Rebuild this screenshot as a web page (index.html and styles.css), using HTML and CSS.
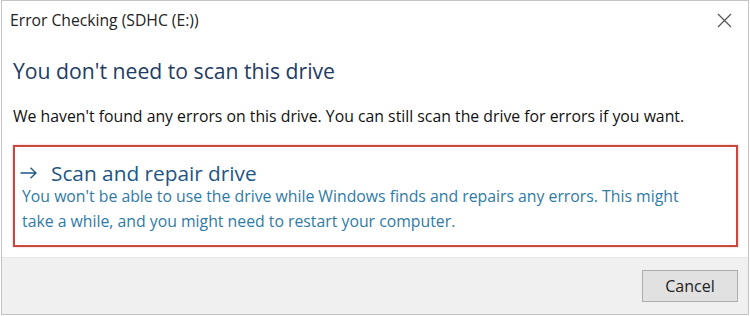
FILE: index.html
```html
<!DOCTYPE html>
<html>
<head>
<meta charset="utf-8">
<link rel="stylesheet" href="styles.css">
</head>
<body>
<div class="window">
  <div class="titlebar">
    <span class="title">Error Checking (SDHC (E:))</span>
    <svg class="close" width="15" height="15" viewBox="0 0 15 15"><path d="M1 1 L14 14 M14 1 L1 14" stroke="#555" stroke-width="1.2" fill="none"/></svg>
  </div>
  <div class="content">
    <h1 class="heading">You don't need to scan this drive</h1>
    <p class="body">We haven't found any errors on this drive. You can still scan the drive for errors if you want.</p>
    <div class="option">
      <div class="option-title"><svg class="arrow" width="17" height="12" viewBox="0 0 17 12"><path d="M0.5 6 H16 M10.5 0.8 L16 6 L10.5 11.2" stroke="#1e5686" stroke-width="1.3" fill="none"/></svg>Scan and repair drive</div>
      <div class="option-desc">You won't be able to use the drive while Windows finds and repairs any errors. This might<br>take a while, and you might need to restart your computer.</div>
    </div>
  </div>
  <div class="footer">
    <button class="btn">Cancel</button>
  </div>
</div>
</body>
</html>
```
FILE: styles.css
```css
html, body { margin: 0; padding: 0; background: #fff; }
body { width: 750px; height: 316px; overflow: hidden; font-family: "Open Sans", "Noto Sans", sans-serif; }
.window {
  box-sizing: border-box;
  width: 748px;
  height: 315px;
  margin-left: 1px;
  border: 1px solid #c4c4c4;
  display: flex;
  flex-direction: column;
  background: #fff;
}
.titlebar {
  height: 38px;
  flex: none;
  display: flex;
  align-items: center;
  justify-content: space-between;
  padding: 0 16px 0 8px;
}
.title { font-size: 15.7px; color: #222; }
.close { display: block; }
.content { flex: 1; padding: 0 10px 0 11px; }
.heading {
  margin: 18px 0 0;
  font-size: 21.2px;
  font-weight: normal;
  color: #1f3c64;
  line-height: 28px;
}
.body {
  margin: 20px 0 0;
  font-size: 15.8px;
  color: #111;
  line-height: 22px;
  white-space: nowrap;
}
.option {
  margin-top: 18px;
  border: 2px solid #c9473c;
  padding: 13px 8px 11px 5px;
  box-shadow: 0 0 2px rgba(200,70,60,0.4);
}
.option-title {
  font-size: 20.8px;
  color: #1e5686;
  line-height: 26px;
  display: flex;
  align-items: center;
}
.arrow { display: block; margin-right: 14px; flex: none; }
.option-desc {
  font-size: 15.8px;
  color: #2f7aa6;
  line-height: 25px;
  margin-top: -2px;
  padding-left: 2px;
  white-space: nowrap;
}
.footer {
  height: 57px;
  flex: none;
  box-sizing: border-box;
  background: #f0f0f0;
  border-top: 1px solid #e6e6e6;
  display: flex;
  justify-content: flex-end;
  align-items: center;
  padding-right: 10px;
}
.btn {
  width: 96px;
  height: 32px;
  background: #e1e1e1;
  border: 1px solid #adadad;
  font-family: inherit;
  font-size: 16px;
  color: #222;
  padding: 0;
}
```
